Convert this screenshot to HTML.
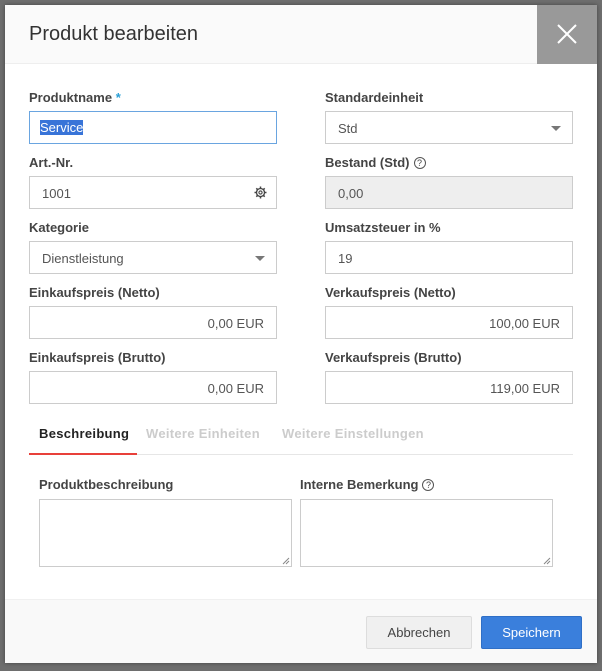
<!DOCTYPE html>
<html><head><style>
*{box-sizing:border-box;margin:0;padding:0}
body{width:602px;height:671px;background:#6e6e6e;font-family:"Liberation Sans",sans-serif;position:relative;overflow:hidden}
.m{position:absolute;left:5px;top:5px;width:592px;height:658px;background:#fff;box-shadow:0 0 4px rgba(0,0,0,.4)}
.hd{position:absolute;left:0;top:0;width:592px;height:59px;background:#fafafa;border-bottom:1px solid #eee}
.hd h1{position:absolute;left:24px;top:18px;font-size:20px;font-weight:normal;color:#333}
.x{position:absolute;right:0;top:0;width:60px;height:59px;background:#999}
.lb{position:absolute;font-size:13px;font-weight:bold;color:#444}
.in{position:absolute;height:33px;border:1px solid #ccc;background:#fff;font-size:13px;color:#555;padding:9px 12px;width:248px}
.r{text-align:right}
.ar{position:absolute;right:11px;top:14px;border-left:5px solid transparent;border-right:5px solid transparent;border-top:5px solid #777}
.q{display:inline-block;width:12px;height:12px;border:1px solid #555;border-radius:50%;font-size:9px;text-align:center;line-height:10px;font-weight:normal;margin-left:4px;vertical-align:1px}
.tab{position:absolute;top:421px;font-size:13px;font-weight:bold;color:#ccc;letter-spacing:0.3px}
.ta{position:absolute;top:494px;width:253px;height:68px;border:1px solid #ccc}
.ta svg{position:absolute;right:1px;bottom:1px}
.ft{position:absolute;left:0;top:594px;width:592px;height:64px;background:#f9f9f9;border-top:1px solid #f0f0f0}
.b{position:absolute;top:16px;height:33px;font-size:13px;text-align:center;line-height:31px;border-radius:2px}
</style></head><body>
<div class="m">
<div class="hd"><h1>Produkt bearbeiten</h1>
<div class="x"><svg width="60" height="59"><path d="M21 20L39 38M39 20L21 38" stroke="#fff" stroke-width="2"/></svg></div></div>

<div class="lb" style="left:24px;top:85px">Produktname <span style="color:#2a9fd6">*</span></div>
<div class="in" style="left:24px;top:106px;border-color:#6aa5e0;padding:8px 10px"><span style="background:#3874d8;color:#fff">Service</span></div>
<div class="lb" style="left:320px;top:85px">Standardeinheit</div>
<div class="in" style="left:320px;top:106px">Std<div class="ar"></div></div>

<div class="lb" style="left:24px;top:150px">Art.-Nr.</div>
<div class="in" style="left:24px;top:171px">1001<svg style="position:absolute;right:9px;top:9px" width="13" height="13" viewBox="0 0 13 13"><circle cx="6.5" cy="6.5" r="4" fill="none" stroke="#444" stroke-width="1.3"/><circle cx="6.5" cy="6.5" r="1.6" fill="none" stroke="#444" stroke-width="1.1"/><path d="M6.5 0.5V2.5M6.5 10.5V12.5M0.5 6.5H2.5M10.5 6.5H12.5M2.3 2.3L3.7 3.7M9.3 9.3L10.7 10.7M2.3 10.7L3.7 9.3M9.3 3.7L10.7 2.3" stroke="#444" stroke-width="1.5"/></svg></div>
<div class="lb" style="left:320px;top:150px">Bestand (Std)<span class="q">?</span></div>
<div class="in" style="left:320px;top:171px;background:#eee">0,00</div>

<div class="lb" style="left:24px;top:215px">Kategorie</div>
<div class="in" style="left:24px;top:236px">Dienstleistung<div class="ar"></div></div>
<div class="lb" style="left:320px;top:215px">Umsatzsteuer in %</div>
<div class="in" style="left:320px;top:236px">19</div>

<div class="lb" style="left:24px;top:280px">Einkaufspreis (Netto)</div>
<div class="in r" style="left:24px;top:301px">0,00 EUR</div>
<div class="lb" style="left:320px;top:280px">Verkaufspreis (Netto)</div>
<div class="in r" style="left:320px;top:301px">100,00 EUR</div>

<div class="lb" style="left:24px;top:345px">Einkaufspreis (Brutto)</div>
<div class="in r" style="left:24px;top:366px">0,00 EUR</div>
<div class="lb" style="left:320px;top:345px">Verkaufspreis (Brutto)</div>
<div class="in r" style="left:320px;top:366px">119,00 EUR</div>

<div class="tab" style="left:34px;color:#222">Beschreibung</div>
<div class="tab" style="left:141px">Weitere Einheiten</div>
<div class="tab" style="left:277px">Weitere Einstellungen</div>
<div style="position:absolute;left:24px;top:449px;width:544px;height:1px;background:#e6e6e6"></div>
<div style="position:absolute;left:24px;top:448px;width:108px;height:2px;background:#e8403a"></div>

<div class="lb" style="left:34px;top:472px">Produktbeschreibung</div>
<div class="lb" style="left:295px;top:472px">Interne Bemerkung<span class="q">?</span></div>
<div class="ta" style="left:34px"><svg width="8" height="8"><path d="M1 7L7 1M4 7L7 4" stroke="#888"/></svg></div>
<div class="ta" style="left:295px"><svg width="8" height="8"><path d="M1 7L7 1M4 7L7 4" stroke="#888"/></svg></div>

<div class="ft">
<div class="b" style="left:361px;width:106px;background:#f0f0f0;border:1px solid #ddd;color:#444">Abbrechen</div>
<div class="b" style="left:476px;width:101px;background:#3a7fdc;border:1px solid #2f6fc6;color:#fff">Speichern</div>
</div>
</div>
</body></html>
